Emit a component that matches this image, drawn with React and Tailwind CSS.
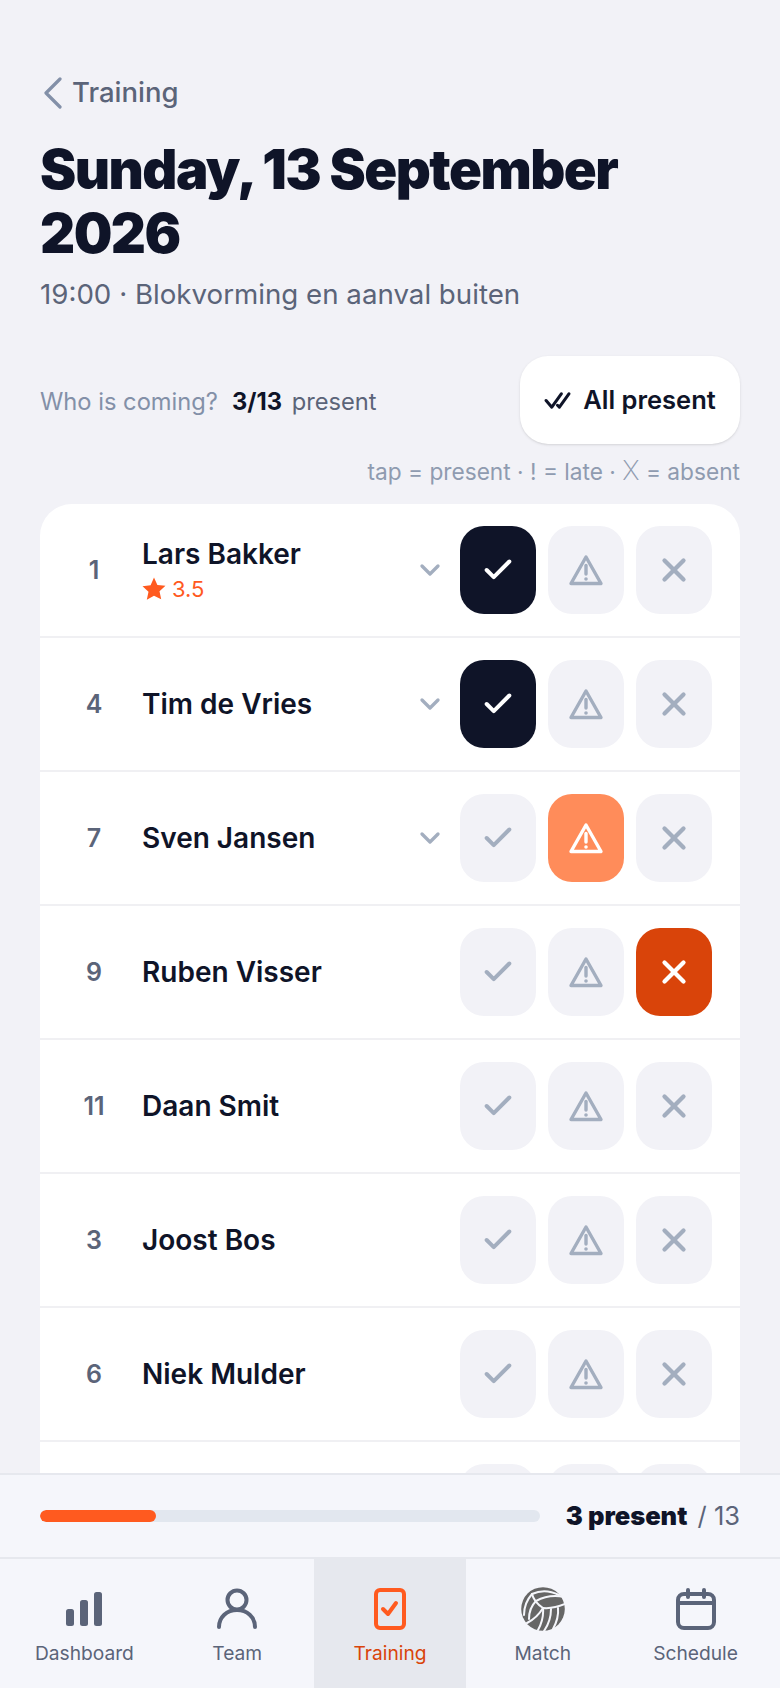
import React from 'react'
import { Check, ChevronDown, X } from 'lucide-react'

const players = [
  { nr: 1, name: 'Lars Bakker', rating: '3.5', more: true, status: 'present' },
  { nr: 4, name: 'Tim de Vries', more: true, status: 'present' },
  { nr: 7, name: 'Sven Jansen', more: true, status: 'late' },
  { nr: 9, name: 'Ruben Visser', status: 'absent' },
  { nr: 11, name: 'Daan Smit' },
  { nr: 3, name: 'Joost Bos' },
  { nr: 6, name: 'Niek Mulder' },
  // only the tops of the buttons show above the bottom bar
  { nr: '', name: '' },
]

const WarnIcon = ({ className }) => (
  <svg viewBox="0 0 36 32" fill="none" className={className} stroke="currentColor">
    <path d="M18 3 L33 29.5 H3 Z" strokeWidth="3.4" strokeLinejoin="round" />
    <path d="M18 11.5v8.5" strokeWidth="3.4" strokeLinecap="round" />
    <circle cx="18" cy="25" r="1.8" fill="currentColor" stroke="none" />
  </svg>
)

const StatusBtn = ({ active, activeClass, children }) => (
  <button className={`w-[76px] h-[88px] rounded-[24px] flex items-center justify-center ${active ? activeClass + ' text-white' : 'bg-[#f2f2f7] text-[#a3aebf]'}`}>
    {children}
  </button>
)

const Row = ({ player }) => (
  <div className="h-[134px] flex items-center border-b-2 border-[#f0f0f3] pl-[18px] pr-[28px]">
    <div className="w-[72px] pt-[2px] text-center text-[25px] font-semibold text-[#5b6479]">{player.nr}</div>
    <div className="ml-[12px] flex-1">
      <div className="text-[28px] leading-[34px] font-semibold text-[#0f1428]">{player.name}</div>
      {player.rating && (
        <div className="mt-[4px] flex items-center gap-[6px] text-[#ff5a1f] text-[22px] leading-[28px]">
          <svg viewBox="0 0 24 24" className="w-[24px] h-[24px]" fill="currentColor"><path d="M12 .5l3.400 7.400 8.100.9-6 5.500 1.700 8L12 18.700l-7.200 4 1.700-8-6-5.500 8.100-.9z" /></svg>
          {player.rating}
        </div>
      )}
    </div>
    {player.more && <ChevronDown className="w-[32px] h-[32px] text-[#a3aebf] mr-[14px]" strokeWidth={2.5} />}
    <div className="flex gap-[12px]">
      <StatusBtn active={player.status === 'present'} activeClass="bg-[#0f1428]"><Check className="w-[34px] h-[34px]" strokeWidth={2.8} /></StatusBtn>
      <StatusBtn active={player.status === 'late'} activeClass="bg-[#ff8c5a]"><WarnIcon className="w-[36px] h-[32px]" /></StatusBtn>
      <StatusBtn active={player.status === 'absent'} activeClass="bg-[#d9440a]"><X className="w-[38px] h-[38px]" strokeWidth={2.7} /></StatusBtn>
    </div>
  </div>
)

const navItems = [
  { label: 'Dashboard', icon: (
    <svg viewBox="0 0 36 36" className="w-[36px] h-[36px]" fill="#5b6479">
      <rect x="0" y="18" width="8" height="17" rx="2.500" /><rect x="14" y="9" width="8" height="26" rx="2.500" /><rect x="28" y="1" width="8" height="34" rx="2.500" />
    </svg>
  ) },
  { label: 'Team', icon: (
    <svg viewBox="0 0 40 42" className="w-[40px] h-[42px]" fill="none" stroke="#5b6479" strokeWidth="4" strokeLinecap="round">
      <circle cx="20" cy="12" r="9.500" /><path d="M2 39c0-10 8-17 18-17s18 7 18 17" />
    </svg>
  ) },
  { label: 'Training', active: true, icon: (
    <svg viewBox="0 0 32 42" className="w-[32px] h-[42px]" fill="none" stroke="#ff5a1f" strokeWidth="4" strokeLinecap="round" strokeLinejoin="round">
      <rect x="2" y="2" width="28" height="38" rx="4" /><path d="M9 21l5 5 8-11" />
    </svg>
  ) },
  { label: 'Match', icon: (
    <svg viewBox="0 0 44 44" className="w-[44px] h-[44px]">
      <circle cx="22" cy="22" r="21.800" fill="#666" />
      <g fill="none" stroke="#f5f6fb" strokeWidth="2" strokeLinecap="round">
        <path d="M11 7Q24 1 38 8" />
        <path d="M15 14Q28 7 43 10" />
        <path d="M22 21Q32 22 44 17" />
        <path d="M11 7Q13 15 22 21" />
        <path d="M11 7Q3 16 3 28" />
        <path d="M15 14Q8 21 8 32" />
        <path d="M22 21Q16 31 6 36" />
        <path d="M22 21Q23 32 17 43" />
        <path d="M30 22Q30 34 23 44" />
        <path d="M37 21Q38 31 32 42" />
      </g>
    </svg>
  ) },
  { label: 'Schedule', icon: (
    <svg viewBox="0 0 40 42" className="w-[40px] h-[42px]" fill="none" stroke="#5b6479" strokeWidth="4" strokeLinecap="round">
      <rect x="2" y="6" width="36" height="34" rx="6" /><path d="M2 15h36M12 2v7M28 2v7" />
    </svg>
  ) },
]

export default function App() {
  return (
    <div className="h-[1688px] w-[780px] flex flex-col overflow-hidden bg-[#f2f2f7] font-['Inter',sans-serif]">
      <div className="flex-1 overflow-hidden px-[40px] pt-[73px]">
        <div className="flex items-center gap-[9px] h-[40px] text-[27.500px] text-[#5b6479] font-medium">
          <svg viewBox="0 0 20 32" className="w-[20px] h-[32px] ml-[3px]" fill="none" stroke="#8390a8" strokeWidth="3.200" strokeLinecap="round" strokeLinejoin="round"><path d="M17 2L3 16l14 14" /></svg>
          Training
        </div>
        <h1 className="mt-[24px] text-[54.400px] leading-[64px] font-black tracking-[-1.500px] text-[#0f1428]">Sunday, 13 September 2026</h1>
        <p className="mt-[9px] text-[27.700px] leading-[40px] text-[#5b6479]">19:00 · Blokvorming en aanval buiten</p>

        <div className="mt-[42px] flex items-center justify-between">
          <div className="pt-[3px] text-[23.700px]">
            <span className="text-[#8390a8]">Who is coming?</span>
            <span className="ml-[14px] font-bold text-[#0f1428]">3/13</span>
            <span className="ml-[3px] text-[#5b6479]"> present</span>
          </div>
          <button className="w-[220px] h-[88px] rounded-[28px] bg-white shadow-sm flex items-center justify-center gap-[12px] text-[25.500px] font-semibold text-[#0f1428]">
            <svg viewBox="0 0 28 20" className="w-[27px] h-[19px]" fill="none" stroke="currentColor" strokeWidth="3.200" strokeLinecap="round" strokeLinejoin="round"><path d="M2 10l6 7 10-14M14 15l2 2 10-14" /></svg>
            All present
          </button>
        </div>
        <p className="mt-[12px] text-right text-[22.700px] leading-[32px] text-[#8f9bb0]">tap = present · ! = late · <span className="text-[27px] leading-[27px] font-extralight">X</span> = absent</p>

        <div className="mt-[16px] bg-white rounded-t-[32px] overflow-hidden">
          {players.map((p, i) => <Row key={i} player={p} />)}
        </div>
      </div>

      <div className="h-[86px] shrink-0 flex items-center gap-[26px] px-[40px] bg-[#f5f6fb] border-y-2 border-[#e6e8ee]">
        <div className="flex-1 h-[12px] rounded-full bg-[#e2e7ef] overflow-hidden">
          <div className="h-full w-[23.300%] rounded-full bg-[#ff5a1f]" />
        </div>
        <div className="text-[25.500px] text-[#5b6479]"><span className="font-black text-[#0f1428]">3 present</span><span className="ml-[3px]"> / 13</span></div>
      </div>

      <nav className="h-[129px] shrink-0 grid grid-cols-5 px-[8px] bg-[#f5f6fb]">
        {navItems.map((item) => (
          <div key={item.label} className={`flex flex-col items-center pt-[28px] ${item.active ? 'bg-[#e6e8ee]' : ''}`}>
            <div className="h-[44px] flex items-center">{item.icon}</div>
            <span className={`mt-[8px] text-[19.200px] ${item.active ? 'text-[#d9440a]' : 'text-[#5b6479]'}`}>{item.label}</span>
          </div>
        ))}
      </nav>
    </div>
  )
}
